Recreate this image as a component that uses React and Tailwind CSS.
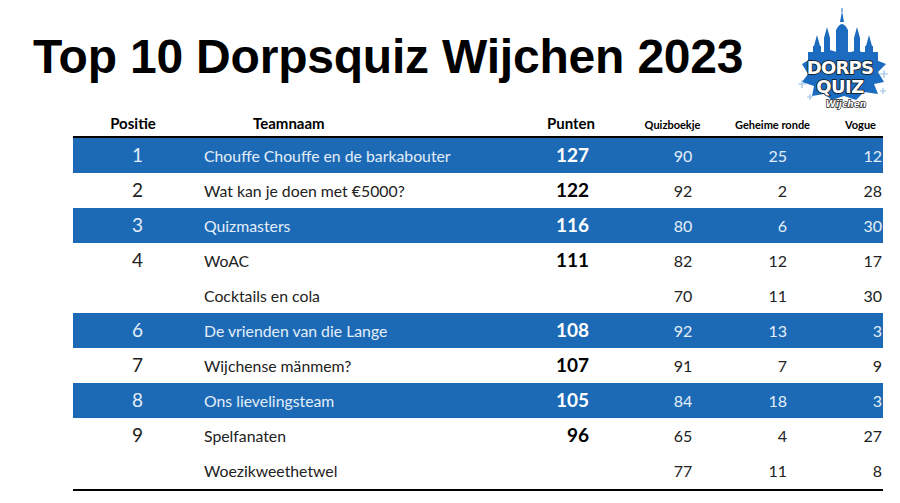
import React from 'react';

const rows = [
  { pos: '1', team: 'Chouffe Chouffe en de barkabouter', punten: '127', quiz: 90, geheim: 25, vogue: 12, blue: true },
  { pos: '2', team: 'Wat kan je doen met €5000?', punten: '122', quiz: 92, geheim: 2, vogue: 28 },
  { pos: '3', team: 'Quizmasters', punten: '116', quiz: 80, geheim: 6, vogue: 30, blue: true },
  { pos: '4', team: 'WoAC', punten: '111', quiz: 82, geheim: 12, vogue: 17 },
  { pos: '', team: 'Cocktails en cola', punten: '', quiz: 70, geheim: 11, vogue: 30 },
  { pos: '6', team: 'De vrienden van die Lange', punten: '108', quiz: 92, geheim: 13, vogue: 3, blue: true },
  { pos: '7', team: 'Wijchense mänmem?', punten: '107', quiz: 91, geheim: 7, vogue: 9 },
  { pos: '8', team: 'Ons lievelingsteam', punten: '105', quiz: 84, geheim: 18, vogue: 3, blue: true },
  { pos: '9', team: 'Spelfanaten', punten: '96', quiz: 65, geheim: 4, vogue: 27 },
  { pos: '', team: 'Woezikweethetwel', punten: '', quiz: 77, geheim: 11, vogue: 8 },
];

const cols = 'grid grid-cols-[127px_280px_155px_95px_85px_68px]';

const Logo = () => (
  <svg width="96" height="102" viewBox="0 0 96 102" className="block">
    {/* castle */}
    <g fill="#1b6cc0">
      <path d="M44 14 L46 3 L48 14 Z" />
      <rect x="45.5" y="0" width="1" height="4" />
      <path d="M40 22 Q46 10 52 22 Z" />
      <rect x="40" y="22" width="12" height="30" />
      <path d="M28 30 L31 19 L34 30 Z" />
      <rect x="28" y="30" width="6" height="22" />
      <path d="M18 38 L21 27 L24 38 Z" />
      <rect x="17" y="38" width="8" height="16" />
      <path d="M58 30 L61 19 L64 30 Z" />
      <rect x="58" y="30" width="6" height="22" />
      <path d="M70 38 L73 27 L76 38 Z" />
      <rect x="69" y="38" width="8" height="16" />
      <rect x="12" y="44" width="70" height="10" />
      {/* starburst */}
      <path d="M6 56 L16 50 L14 44 L24 48 L34 42 L48 46 L62 42 L72 48 L82 44 L80 52 L90 56 L82 64 L88 74 L78 76 L82 86 L68 84 L60 92 L48 88 L36 92 L28 86 L16 88 L18 78 L6 74 L12 66 Z" />
    </g>
    {/* sparkles */}
    <g stroke="#9cc3ea" strokeWidth="1.2" fill="none">
      <path d="M6 72 v8 M2 76 h8" />
      <path d="M14 86 v6 M11 89 h6" />
      <path d="M88 62 v8 M84 66 h8" />
      <path d="M87 80 v6 M84 83 h6" />
    </g>
    <g fontFamily="'DejaVu Sans', sans-serif" fontWeight="700" textAnchor="middle" fill="#fff" stroke="#111" strokeWidth="1.6" paintOrder="stroke">
      <text x="44" y="66" fontSize="18" letterSpacing="-0.8">DORPS</text>
      <text x="44" y="85" fontSize="18" letterSpacing="-0.5">QUIZ</text>
    </g>
    <text x="50" y="99" fontSize="9" fontWeight="700" textAnchor="middle" fill="#fff" stroke="#111" strokeWidth="1.3" paintOrder="stroke" fontFamily="'DejaVu Sans', sans-serif" fontStyle="italic">Wijchen</text>
  </svg>
);

export default function App() {
  return (
    <div className="w-[900px] h-[503px] bg-white overflow-hidden font-['Lato',sans-serif] text-[#222]">
      <div className="flex items-start justify-between pl-[33px] pr-[8px] pt-[8px]">
        <h1 className="mt-[21px] font-['Liberation_Sans',Arial,sans-serif] font-bold text-[48px] leading-[56px] text-black tracking-[-0.2px]">
          Top 10 Dorpsquiz Wijchen 2023
        </h1>
        <Logo />
      </div>

      <div className="ml-[73px] w-[810px]">
        <div className={`${cols} items-end h-[28px] pb-[2px] border-b-2 border-black text-black`}>
          <div className="text-center text-[15px] font-bold pr-[7px]">Positie</div>
          <div className="pl-[53px] text-[15px] font-bold">Teamnaam</div>
          <div className="text-right pr-[40px] text-[15px] font-bold">Punten</div>
          <div className="text-center text-[11px] font-bold pb-[1px] pr-[20px]">Quizboekje</div>
          <div className="text-center text-[11px] font-bold pb-[1px]">Geheime ronde</div>
          <div className="text-right pr-[7px] text-[11px] font-bold pb-[1px]">Vogue</div>
        </div>
        {rows.map((r, i) => (
          <div
            key={i}
            className={`${cols} items-center h-[35px] ${r.blue ? 'bg-[#1c6ab6] text-[#e4eef8]' : 'bg-white text-[#222]'}`}
          >
            <div className="text-center text-[19px] pl-[2px]">{r.pos}</div>
            <div className="pl-[4px] text-[15.8px] whitespace-nowrap">{r.team}</div>
            <div className={`text-right pr-[46px] text-[19px] font-bold ${r.blue ? 'text-white' : 'text-black'}`}>{r.punten}</div>
            <div className="text-center text-[16px] pl-[1px]">{r.quiz}</div>
            <div className="text-right pr-[28px] text-[16px]">{r.geheim}</div>
            <div className="text-right pr-[1px] text-[16px]">{r.vogue}</div>
          </div>
        ))}
        <div className="border-t-2 border-black mt-[1px]" />
      </div>
    </div>
  );
}
